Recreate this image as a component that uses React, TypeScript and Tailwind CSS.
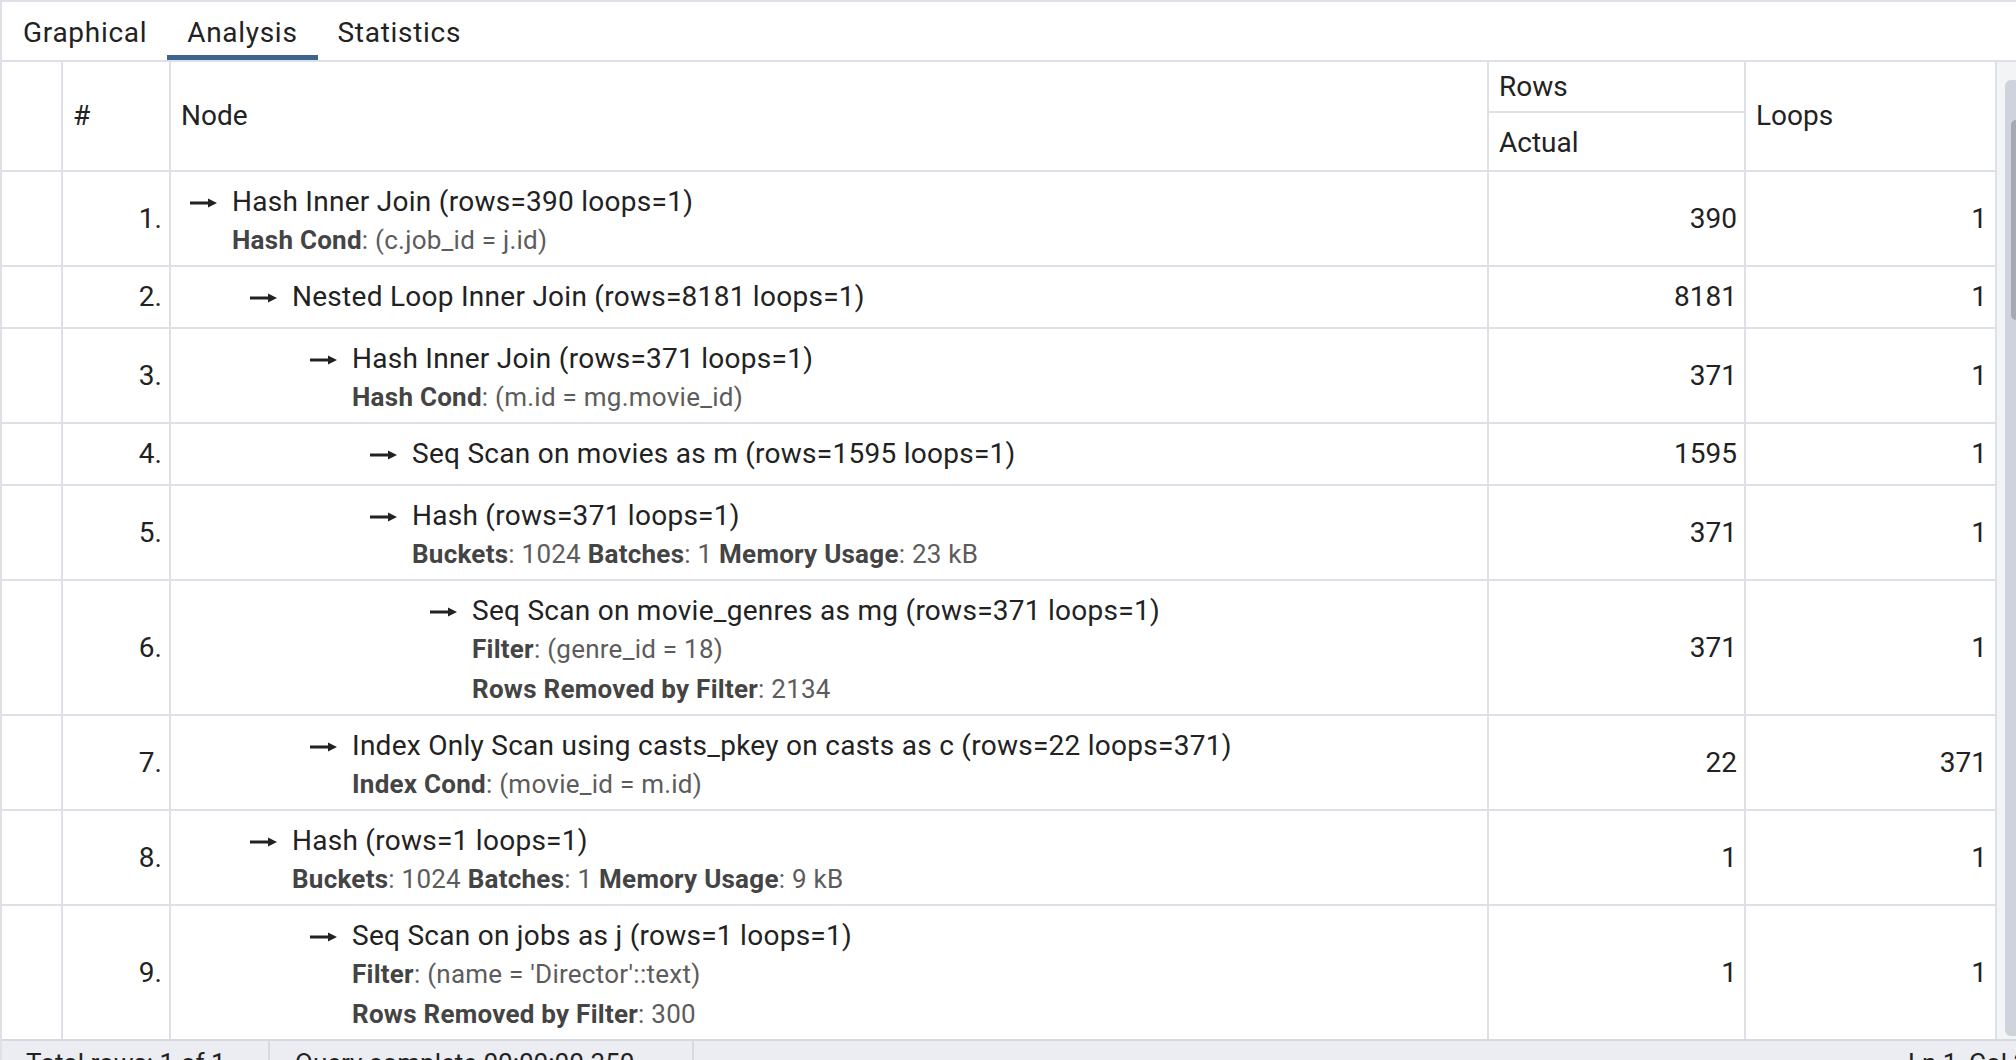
import React from "react";

type Pair = [string, string];
type Node = {
  n: number;
  depth: number;
  title: string;
  details: Pair[][];
  rows: string;
  loops: string;
};

const data: Node[] = [
  { n: 1, depth: 0, title: "Hash Inner Join (rows=390 loops=1)", details: [[["Hash Cond", "(c.job_id = j.id)"]]], rows: "390", loops: "1" },
  { n: 2, depth: 1, title: "Nested Loop Inner Join (rows=8181 loops=1)", details: [], rows: "8181", loops: "1" },
  { n: 3, depth: 2, title: "Hash Inner Join (rows=371 loops=1)", details: [[["Hash Cond", "(m.id = mg.movie_id)"]]], rows: "371", loops: "1" },
  { n: 4, depth: 3, title: "Seq Scan on movies as m (rows=1595 loops=1)", details: [], rows: "1595", loops: "1" },
  {
    n: 5,
    depth: 3,
    title: "Hash (rows=371 loops=1)",
    details: [[["Buckets", "1024"], ["Batches", "1"], ["Memory Usage", "23 kB"]]],
    rows: "371",
    loops: "1",
  },
  {
    n: 6,
    depth: 4,
    title: "Seq Scan on movie_genres as mg (rows=371 loops=1)",
    details: [[["Filter", "(genre_id = 18)"]], [["Rows Removed by Filter", "2134"]]],
    rows: "371",
    loops: "1",
  },
  {
    n: 7,
    depth: 2,
    title: "Index Only Scan using casts_pkey on casts as c (rows=22 loops=371)",
    details: [[["Index Cond", "(movie_id = m.id)"]]],
    rows: "22",
    loops: "371",
  },
  {
    n: 8,
    depth: 1,
    title: "Hash (rows=1 loops=1)",
    details: [[["Buckets", "1024"], ["Batches", "1"], ["Memory Usage", "9 kB"]]],
    rows: "1",
    loops: "1",
  },
  {
    n: 9,
    depth: 2,
    title: "Seq Scan on jobs as j (rows=1 loops=1)",
    details: [[["Filter", "(name = 'Director'::text)"]], [["Rows Removed by Filter", "300"]]],
    rows: "1",
    loops: "1",
  },
];

const indent = ["pl-[19px]", "pl-[79px]", "pl-[139px]", "pl-[199px]", "pl-[259px]"];

const Arrow = () => (
  <svg width="27" height="10" viewBox="0 0 27 10" className="shrink-0 mt-[2px]">
    <rect x="0" y="3.5" width="20" height="3" fill="#222222" />
    <path d="M18 0.5 L27 5 L18 9.5 Z" fill="#222222" />
  </svg>
);

function Row({ node }: { node: Node }) {
  return (
    <div className="flex border-b-2 border-[#dde0e6]">
      <div className="w-[61px] shrink-0 border-r-2 border-[#dde0e6]" />
      <div className="w-[108px] shrink-0 border-r-2 border-[#dde0e6] flex items-center justify-end pr-[7px] min-h-[60px]">
        {node.n}.
      </div>
      <div className={`w-[1318px] shrink-0 border-r-2 border-[#dde0e6] pt-[11px] pb-[6px] ${indent[node.depth]}`}>
        <div className="flex items-center h-[38px] leading-[38px]">
          <Arrow />
          <span className="ml-[15px] whitespace-nowrap tracking-[0.27px]">{node.title}</span>
        </div>
        {node.details.length > 0 && (
          <div className="flex flex-col gap-[2px]">
            {node.details.map((line, i) => (
              <div key={i} className="pl-[42px] h-[38px] leading-[38px] text-[26px] tracking-[0.25px] whitespace-nowrap">
                {line.map(([k, v], j) => (
                  <span key={j}>
                    {j > 0 ? " " : ""}
                    <span className="font-bold text-[#444444]">{k}</span>
                    <span className="text-[#5c5c5c]">: {v}</span>
                  </span>
                ))}
              </div>
            ))}
          </div>
        )}
      </div>
      <div className="w-[257px] shrink-0 border-r-2 border-[#dde0e6] flex items-center justify-end pr-[7px]">
        {node.rows}
      </div>
      <div className="w-[251px] shrink-0 border-r-2 border-[#dde0e6] flex items-center justify-end pr-[8px]">
        {node.loops}
      </div>
    </div>
  );
}

export default function App() {
  return (
    <div className="w-[2016px] h-[1060px] overflow-hidden bg-white font-['Roboto',sans-serif] text-[28px] text-[#222222] flex flex-col border-t-2 border-l-2 border-[#dde0e6]">
      {/* Tabs */}
      <div className="h-[60px] shrink-0 flex border-b-2 border-[#dde0e6] tracking-[0.7px]">
        <div className="pl-[21px] pr-[20px] pt-[4px] flex items-center h-full">Graphical</div>
        <div className="px-[20px] pt-[4px] flex items-center h-full relative">
          Analysis
          <div className="absolute left-0 right-0 bottom-0 h-[5px] bg-[#3d648e]" />
        </div>
        <div className="px-[20px] pt-[4px] flex items-center h-full">Statistics</div>
      </div>

      {/* Main */}
      <div className="flex flex-1 min-h-0">
        <div className="w-[1995px] shrink-0 flex flex-col overflow-hidden">
          {/* Header */}
          <div className="flex h-[110px] shrink-0 border-b-2 border-[#dde0e6]">
            <div className="w-[61px] shrink-0 border-r-2 border-[#dde0e6]" />
            <div className="w-[108px] shrink-0 border-r-2 border-[#dde0e6] flex items-center pl-[10px]">#</div>
            <div className="w-[1318px] shrink-0 border-r-2 border-[#dde0e6] flex items-center pl-[10px]">Node</div>
            <div className="w-[257px] shrink-0 border-r-2 border-[#dde0e6] flex flex-col">
              <div className="h-[51px] shrink-0 border-b-2 border-[#dde0e6] flex items-center pl-[10px]">Rows</div>
              <div className="flex-1 flex items-center pl-[10px] pt-[2px]">Actual</div>
            </div>
            <div className="w-[251px] shrink-0 border-r-2 border-[#dde0e6] flex items-center pl-[10px]">Loops</div>
          </div>
          {data.map((node) => (
            <Row key={node.n} node={node} />
          ))}
          <div className="flex flex-1">
            <div className="w-[61px] shrink-0 border-r-2 border-[#dde0e6]" />
            <div className="w-[108px] shrink-0 border-r-2 border-[#dde0e6]" />
            <div className="w-[1318px] shrink-0 border-r-2 border-[#dde0e6]" />
            <div className="w-[257px] shrink-0 border-r-2 border-[#dde0e6]" />
            <div className="w-[251px] shrink-0 border-r-2 border-[#dde0e6]" />
          </div>
        </div>
        {/* Scrollbar */}
        <div className="w-[19px] shrink-0 bg-[#f3f4f6] flex flex-col pt-[18px] pb-[3px] pl-[8px]">
          <div className="flex-1 bg-[#cfd3db] rounded-l-[6px] pt-[40px] pl-[6px]">
            <div className="h-[200px] bg-[#a7a9b0] rounded-l-[5px]" />
          </div>
        </div>
      </div>

      {/* Status bar */}
      <div className="h-[21px] shrink-0 border-t-2 border-[#d6d9df] bg-[#ebedf2] flex text-[26px] text-[#222222] overflow-hidden">
        <div className="w-[268px] shrink-0 border-r-2 border-[#d6d9df] pl-[24px] pt-[4px] leading-[36px] whitespace-nowrap">
          Total rows: 1 of 1
        </div>
        <div className="w-[424px] shrink-0 border-r-2 border-[#d6d9df] pl-[25px] pt-[4px] leading-[36px] whitespace-nowrap">
          Query complete 00:00:00.350
        </div>
        <div className="flex-1" />
        <div className="w-[108px] shrink-0 pt-[4px] leading-[36px] whitespace-nowrap">Ln 1, Col 22</div>
      </div>
    </div>
  );
}
